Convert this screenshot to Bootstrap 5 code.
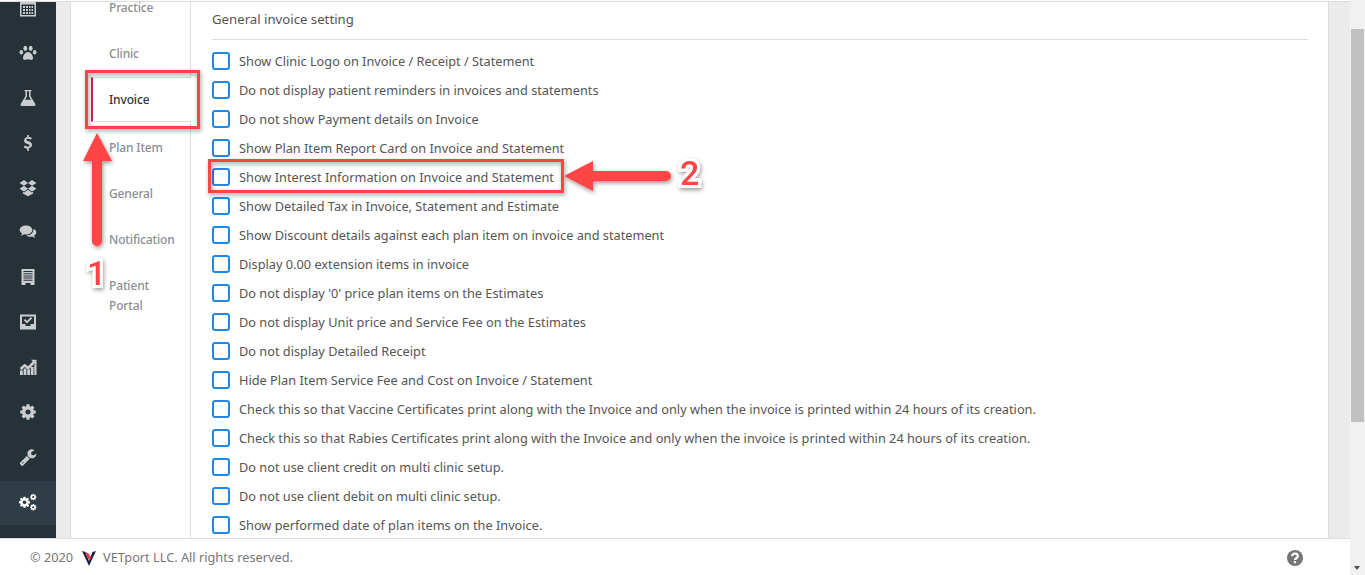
<!DOCTYPE html>
<html lang="en">
<head>
<meta charset="utf-8">
<title>Invoice settings</title>
<link href="https://cdn.jsdelivr.net/npm/bootstrap@5.3.0/dist/css/bootstrap.min.css" rel="stylesheet">
<style>
html,body{height:575px;overflow:hidden;}
body{font-family:"Noto Sans","Liberation Sans",sans-serif;font-size:12.75px;color:#555;background:#fff;position:relative;}
.page-main{min-width:0;height:575px;}
.top-line{height:2px;border-bottom:1px solid #ddd;flex:none;}
.middle{min-height:0;background:#ebebeb;}
.rail{width:56px;background:#263238;overflow:hidden;flex:none;}
.rail-list{margin-top:-16.5px;}
.rail-item{height:44.9px;color:#c9cdcf;}
.rail-item svg{width:18px;height:18px;fill:currentColor;display:block;}
.rail-item.on{background:#2f3e46;color:#fff;margin-top:1.600px;height:44px;}
.rail-item.on svg{margin-top:-2px;}
.panel{margin:0 21px 0 14px;background:#fff;border-left:1px solid #ddd;border-right:1px solid #ddd;min-width:0;overflow:hidden;}
.side-nav{width:120px;flex:none;border-right:1px solid #ddd;}
.side-link{padding:13px 0 13px 38px;line-height:20px;color:#8a8f94;font-weight:500;font-size:12px;letter-spacing:-.15px;}
.side-link.first-cut{padding-top:0;padding-bottom:17px;line-height:12px;}
.side-link.on{color:#333;margin:0 -1px 3px 20px;padding:12px 0 11px 16px;border-left:2px solid #d81b60;border-top:1px solid #ddd;border-bottom:1px solid #ddd;background:#fff;position:relative;}
.content{padding:0 20px 0 21px;min-width:0;}
.set-title{font-size:13.2px;line-height:20px;padding:7px 0 10px;border-bottom:1px solid #ddd;margin-bottom:7px;color:#555;}
.set-row{height:29px;margin:0;padding:0;white-space:nowrap;}
.set-row input{width:18px;height:18px;margin:-2px 9px 0 0;border:2px solid #1e88e5;border-radius:2px;float:none;flex:none;}
.foot{height:37px;flex:none;border-top:1px solid #ddd;background:#fff;padding:2px 47px 0 30px;font-size:12.75px;color:#777;}
.foot-logo{margin:0 7px 0 9px;}
.scroll-rail{width:15px;background:#f1f1f1;flex:none;position:relative;}
.scroll-thumb{position:absolute;left:1px;right:1px;top:29px;height:393px;background:#c1c1c1;}
.scroll-down{position:absolute;left:4px;bottom:5px;width:0;height:0;border-left:3.5px solid transparent;border-right:3.5px solid transparent;border-top:4px solid #505050;}
.marks{position:absolute;left:0;top:0;width:1365px;height:575px;pointer-events:none;}
.marks text{font-family:Roboto,"Liberation Sans",sans-serif;font-weight:500;font-size:34px;fill:#f44;stroke:#fff;stroke-width:6px;paint-order:stroke;}
</style>
</head>
<body class="d-flex">
<svg width="0" height="0" class="d-none"><defs><symbol id="gear" viewBox="0 0 1792 1792"><path d="M1152 896q0-106-75-181t-181-75-181 75-75 181 75 181 181 75 181-75 75-181zm512-109v222q0 12-8 23t-20 13l-185 28q-19 54-39 91 35 50 107 138 10 12 10 25t-9 23q-27 37-99 108t-94 71q-12 0-26-9l-138-108q-44 23-91 38-16 136-29 186-7 28-36 28h-222q-14 0-24.500-8.500t-11.500-21.500l-28-184q-49-16-90-37l-141 107q-10 9-25 9-14 0-25-11-126-114-165-168-7-10-7-23 0-12 8-23 15-21 51-66.500t54-70.500q-27-50-41-99l-183-27q-13-2-21-12.500t-8-23.500v-222q0-12 8-23t19-13l186-28q14-46 39-92-40-57-107-138-10-12-10-24 0-10 9-23 26-36 98.500-107.500t94.500-71.500q13 0 26 10l138 107q44-23 91-38 16-136 29-186 7-28 36-28h222q14 0 24.500 8.500t11.500 21.500l28 184q49 16 90 37l142-107q9-9 24-9 13 0 25 10 129 119 165 170 7 8 7 22 0 12-8 23-15 21-51 66.500t-54 70.500q26 50 41 98l183 28q13 2 21 12.500t8 23.500z"/></symbol></defs></svg>
<div class="page-main flex-grow-1 d-flex flex-column">
  <div class="top-line"></div>
  <div class="middle flex-grow-1 d-flex">
    <nav class="rail">
      <div class="rail-list">
        <div class="rail-item d-flex align-items-center justify-content-center"><svg viewBox="0 0 18 18"><path fill-rule="evenodd" d="M1 2h16v15.500H1zM2.500 5.500v10.500h13V5.500zM4 7h2v2H4zm3 0h2v2H7zm3 0h1.500v2H10zm2.500 0H14v2h-1.500zM4 10h2v2H4zm3 0h2v2H7zm3 0h1.500v2H10zm2.500 0H14v2h-1.500zM4 13h2v2H4zm3 0h2v2H7zm3 0h1.500v2H10zm2.500 0H14v2h-1.500z"/></svg></div>
        <div class="rail-item d-flex align-items-center justify-content-center"><svg viewBox="0 0 18 18"><ellipse cx="6.300" cy="4.300" rx="1.900" ry="2.600"/><ellipse cx="11.700" cy="4.300" rx="1.900" ry="2.600"/><ellipse cx="2.300" cy="8.200" rx="1.800" ry="2.300"/><ellipse cx="15.700" cy="8.200" rx="1.800" ry="2.300"/><path d="M9 8c2.500 0 5 3.600 5 6 0 2-1.600 2-2.500 1.800-1-.2-1.800-.6-2.500-.6s-1.500.4-2.500.6C5.600 16 4 16 4 14c0-2.400 2.500-6 5-6z"/></svg></div>
        <div class="rail-item d-flex align-items-center justify-content-center"><svg viewBox="0 0 18 18"><path fill-rule="evenodd" d="M5.500 1h7v1.300h-1V7l4.800 8c.5 1-.1 2-1.300 2H3c-1.200 0-1.800-1-1.300-2l4.800-8V2.300h-1zM8 2.300v5.100L6 10.800h6L10 7.400V2.300z"/></svg></div>
        <div class="rail-item d-flex align-items-center justify-content-center"><svg viewBox="0 0 18 18"><path d="M8.200 1h1.700v1.900c1.300.1 2.300.5 3 1l-1 1.800c-.8-.5-1.800-.9-2.900-.9-1 0-1.600.4-1.600 1 0 .7.800 1 2.200 1.500 2 .7 3.400 1.500 3.400 3.500 0 1.800-1.200 3-3.100 3.300V17H8.200v-2.300c-1.300-.1-2.600-.6-3.500-1.400l1.200-1.800c.9.700 2 1.200 3 1.200s1.700-.4 1.700-1.100-.8-1.100-2.200-1.600C6.400 9.300 5.100 8.500 5.100 6.500c0-1.800 1.200-3.100 3.100-3.500z"/></svg></div>
        <div class="rail-item d-flex align-items-center justify-content-center"><svg viewBox="0 0 18 18"><path d="M5 1l4 2.900L5 6.800 .5 3.900zM13 1l4.500 2.900L13 6.800 9 3.900zM5 6.800l4 2.900-4 2.700-4.500-2.700zM13 6.800l4.500 2.900-4.500 2.700-4-2.700zM5 13.500l4-2.700 4 2.700 1.200-.7v1.700L9 17.300l-5.200-2.800v-1.700z"/></svg></div>
        <div class="rail-item d-flex align-items-center justify-content-center"><svg viewBox="0 0 18 18"><path d="M7 2.500c3.500 0 6.300 2 6.300 4.500S10.500 11.500 7 11.500c-.8 0-1.400-.1-2-.2-.9.7-2 1.200-3.200 1.300.6-.7 1.100-1.500 1.300-2.300C1.600 9.500.7 8.300.7 7 .7 4.500 3.500 2.500 7 2.500z"/><path d="M14.500 5.800c1.700.8 2.800 2.100 2.800 3.600 0 1.300-.8 2.400-2.200 3.200.2.900.6 1.600 1.200 2.300-1.200-.1-2.300-.6-3.200-1.300-.6.1-1.200.2-1.800.2-1.600 0-3.100-.5-4.100-1.300 4 .2 7.500-2.500 7.300-6.700z"/></svg></div>
        <div class="rail-item d-flex align-items-center justify-content-center"><svg viewBox="0 0 18 18"><path fill-rule="evenodd" d="M2.500 1h13v16h-4v-2h-5v2h-4zM4.500 3v1h9V3zm0 2.200v1h9v-1zm0 2.200v1h9v-1zm0 2.200v1h9v-1zm0 2.200v1h9v-1z"/></svg></div>
        <div class="rail-item d-flex align-items-center justify-content-center"><svg viewBox="0 0 18 18"><path fill-rule="evenodd" d="M1 1.500h16v15H1zM3 3.500V11h3.500v2h5v-2H15V3.500zM8 10.500 4.800 7.300l1.300-1.300L8 7.900l3.900-3.900 1.300 1.300z"/></svg></div>
        <div class="rail-item d-flex align-items-center justify-content-center"><svg viewBox="0 0 18 18"><path d="M1 12.500h2.800V17H1zM4.600 10.500h2.800V17H4.600zM8.200 11.500H11V17H8.200zM11.800 9H14.600v8h-2.800zM15.300 6.500H17.500V17h-2.200zM1 9.700l4.500-4 3.600 2.600 4.600-4.700L12 1.800h5.500v5.500l-1.800-1.800-6.400 6.300-3.700-2.700L2 12.500z"/></svg></div>
        <div class="rail-item d-flex align-items-center justify-content-center"><svg viewBox="0 0 1792 1792"><use href="#gear"/></svg></div>
        <div class="rail-item d-flex align-items-center justify-content-center"><svg viewBox="0 0 1792 1792"><path d="M448 1472q0-26-19-45t-45-19-45 19-19 45 19 45 45 19 45-19 19-45zm644-420l-682 682q-37 37-90 37-52 0-91-37l-106-108q-38-36-38-90 0-53 38-91l681-681q39 98 114.500 173.500t173.500 114.500zm634-435q0 39-23 106-47 134-164.500 217.500t-258.500 83.500q-185 0-316.500-131.500t-131.500-316.500 131.500-316.500 316.500-131.500q58 0 121.500 16.500t107.500 46.500q16 11 16 28t-16 28l-293 169v224l193 107q5-3 79-48.500t135.500-81 70.500-35.500q15 0 23.500 10t8.500 25z"/></svg></div>
        <div class="rail-item on d-flex align-items-center justify-content-center"><svg viewBox="0 0 18 18"><use href="#gear" x="-1" y="2.800" width="13" height="13"/><use href="#gear" x="10.500" y=".3" width="7.500" height="7.500"/><use href="#gear" x="10.500" y="10.500" width="7.500" height="7.500"/></svg></div>
      </div>
    </nav>
    <div class="panel flex-grow-1 d-flex">
      <div class="side-nav">
        <div class="side-link first-cut">Practice</div>
        <div class="side-link">Clinic</div>
        <div class="side-link on">Invoice</div>
        <div class="side-link">Plan Item</div>
        <div class="side-link">General</div>
        <div class="side-link">Notification</div>
        <div class="side-link">Patient<br>Portal</div>
      </div>
      <div class="content flex-grow-1">
        <div class="set-title">General invoice setting</div>
        <label class="set-row d-flex align-items-center"><input class="form-check-input" type="checkbox">Show Clinic Logo on Invoice / Receipt / Statement</label>
        <label class="set-row d-flex align-items-center"><input class="form-check-input" type="checkbox">Do not display patient reminders in invoices and statements</label>
        <label class="set-row d-flex align-items-center"><input class="form-check-input" type="checkbox">Do not show Payment details on Invoice</label>
        <label class="set-row d-flex align-items-center"><input class="form-check-input" type="checkbox">Show Plan Item Report Card on Invoice and Statement</label>
        <label class="set-row d-flex align-items-center"><input class="form-check-input" type="checkbox">Show Interest Information on Invoice and Statement</label>
        <label class="set-row d-flex align-items-center"><input class="form-check-input" type="checkbox">Show Detailed Tax in Invoice, Statement and Estimate</label>
        <label class="set-row d-flex align-items-center"><input class="form-check-input" type="checkbox">Show Discount details against each plan item on invoice and statement</label>
        <label class="set-row d-flex align-items-center"><input class="form-check-input" type="checkbox">Display 0.00 extension items in invoice</label>
        <label class="set-row d-flex align-items-center"><input class="form-check-input" type="checkbox">Do not display '0' price plan items on the Estimates</label>
        <label class="set-row d-flex align-items-center"><input class="form-check-input" type="checkbox">Do not display Unit price and Service Fee on the Estimates</label>
        <label class="set-row d-flex align-items-center"><input class="form-check-input" type="checkbox">Do not display Detailed Receipt</label>
        <label class="set-row d-flex align-items-center"><input class="form-check-input" type="checkbox">Hide Plan Item Service Fee and Cost on Invoice / Statement</label>
        <label class="set-row d-flex align-items-center"><input class="form-check-input" type="checkbox">Check this so that Vaccine Certificates print along with the Invoice and only when the invoice is printed within 24 hours of its creation.</label>
        <label class="set-row d-flex align-items-center"><input class="form-check-input" type="checkbox">Check this so that Rabies Certificates print along with the Invoice and only when the invoice is printed within 24 hours of its creation.</label>
        <label class="set-row d-flex align-items-center"><input class="form-check-input" type="checkbox">Do not use client credit on multi clinic setup.</label>
        <label class="set-row d-flex align-items-center"><input class="form-check-input" type="checkbox">Do not use client debit on multi clinic setup.</label>
        <label class="set-row d-flex align-items-center"><input class="form-check-input" type="checkbox">Show performed date of plan items on the Invoice.</label>
      </div>
    </div>
  </div>
  <footer class="foot d-flex align-items-center justify-content-between">
    <div class="d-flex align-items-center">
      <span>© 2020</span>
      <svg class="foot-logo" width="14" height="15" viewBox="0 0 14 15"><path fill="#1c2340" d="M0 0l3.500 1 3.500 9 3.500-9L14 0 7 15z"/><path fill="#e53946" d="M3.500 1l4.500 2.500-1.300 1 3.300.7-2.300 4.300L5 5.500 3.800 4z"/></svg>
      <span>VETport LLC. All rights reserved.</span>
    </div>
    <svg width="16" height="16" viewBox="0 0 16 16"><circle cx="8" cy="8" r="8" fill="#757575"/><path fill="none" stroke="#fff" stroke-width="2.200" d="M5.200 6.200C5.300 4.500 6.500 3.700 8 3.700c1.600 0 2.800.9 2.800 2.300 0 1.100-.7 1.700-1.500 2.200-.8.500-1.300 1-1.300 1.800"/><rect x="6.900" y="11" width="2.200" height="2.200" fill="#fff"/></svg>
  </footer>
</div>
<div class="scroll-rail"><div class="scroll-thumb"></div><div class="scroll-down"></div></div>
<svg class="marks" viewBox="0 0 1365 575">
  <defs><filter id="sh" x="-20%" y="-20%" width="140%" height="140%"><feDropShadow dx="1" dy="2" stdDeviation="2" flood-color="#000" flood-opacity=".4"/></filter></defs>
  <g filter="url(#sh)" fill="none" stroke="#f44" stroke-width="3">
    <rect x="86.500" y="71.500" width="112" height="56"/>
    <rect x="209.500" y="160.500" width="353" height="31"/>
  </g>
  <g filter="url(#sh)" fill="#f44">
    <path d="M97 133 112 161H102V241a5 5 0 0 1-10 0V161H83z"/>
    <path d="M564 176 593 161V171H666a5 5 0 0 1 0 10H593V191z"/>
  </g>
  <g filter="url(#sh)"><text x="87" y="285">1</text><text x="680" y="185">2</text></g>
</svg>
<script src="https://cdn.jsdelivr.net/npm/bootstrap@5.3.0/dist/js/bootstrap.bundle.min.js"></script>
</body>
</html>
